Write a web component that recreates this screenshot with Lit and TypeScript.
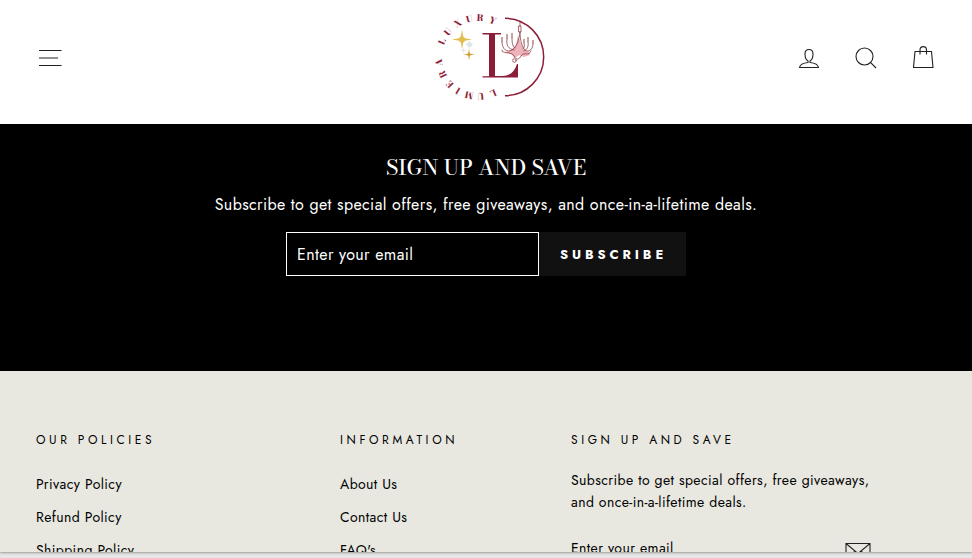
import { LitElement, html, svg, css } from "lit";
import { customElement } from "lit/decorators.js";

@customElement("brand-logo")
class BrandLogo extends LitElement {
  static styles = css`
    :host { display: block; }
    svg { display: block; }
    .ring { font: 800 9px "Bodoni Moda", "Liberation Serif", serif; fill: #8c1d38; text-anchor: middle; letter-spacing: 0; }
    .wine { fill: #8c1d38; }
    .arc { fill: none; stroke: #8c1d38; stroke-width: 1.5; }
    .gold { fill: #e2bd4b; }
    .amber { fill: #d0a23a; }
    .silver { fill: #dfe3e8; }
    .blush { fill: #efb3bb; }
    .arms { fill: none; stroke: #8a4048; stroke-width: 0.8; stroke-linecap: round; }
    .candles { fill: none; stroke: #b08078; stroke-width: 1.4; }
  `;

  private letters: [string, number][] = [
    ["L", -67], ["U", -50], ["X", -31], ["U", -13], ["R", 3], ["Y", 22],
    ["L", -203], ["U", -184], ["M", -167], ["I", -149], ["E", -134], ["R", -116], ["A", -98],
  ];

  private star(x: number, y: number, r: number, name: string) {
    const c = r / 7;
    return svg`<path class=${name} d="M${x} ${y - r}L${x + c} ${y - c}L${x + r} ${y}L${x + c} ${y + c}L${x} ${y + r}L${x - c} ${y + c}L${x - r} ${y}L${x - c} ${y - c}Z"/>`;
  }

  render() {
    return html`<svg width="116" height="92" viewBox="-3 0 116 92" role="img" aria-label="Lumiera Luxury">
      ${this.letters.map(([ch, a]) => svg`<text class="ring" transform="rotate(${a} 46 46) translate(46 10)">${ch}</text>`)}
      <path class="arc" d="M73 7.3A38.7 38.7 0 0 1 73 84.7"/>
      ${this.star(30, 28.5, 10, "gold")}
      <circle class="gold" cx="30" cy="28.5" r="3"/>
      ${this.star(37.5, 33.5, 5, "silver")}
      <circle class="silver" cx="37.5" cy="33.5" r="2.5"/>
      ${this.star(31.5, 39.5, 3.5, "silver")}
      ${this.star(37, 43.5, 6, "amber")}
      <circle class="amber" cx="37" cy="43.5" r="1.8"/>
      <path class="wine" d="M50.5 22H69v1.400H63V65h7.500c7 0 12-4 14.500-12h1V66.500H50.500V65.200h6.500V23.400h-6.500z"/>
      <path class="blush" d="M86 24l3 9 3 6 5 2 1 3-6 2-5-2-4 3-4-4-7-1 7-3 5-5z"/>
      <path class="candles" d="M70 26v5M75 23v5M80 22v5M92 28v4M96 26v5M101 29v4"/>
      <path class="arms" d="M88 11v4M87 15h2v6h-2zM88 21c-1 8-3 15-8 18-5 3-10-1-10-8M88 21c0 8 2 15 5 18 4 3 8-1 8-6M75 28c-1 6 1 10 7 11M80 27c0 6 1 9 3 10M92 32c1 3 0 5-1 6M96 31c1 4-1 8-4 9M70 39c-2 4 10 1 12 6 2 4 5 4 7 0 3-5 8 1 10-5"/>
      <circle class="arms" cx="82.5" cy="49.500" r="1.800"/>
    </svg>`;
  }
}

@customElement("app-root")
class AppRoot extends LitElement {
  static styles = css`
    :host {
      display: flex;
      flex-direction: column;
      height: 100vh;
      background: #e6e6e6;
      font-family: Jost, Lato, sans-serif;
      font-size: 16px;
      letter-spacing: 0.025em;
      color: #000;
    }
    * { box-sizing: border-box; }
    h2, h3, p, ul { margin: 0; padding: 0; font-weight: 400; }
    ul { list-style: none; }
    a { color: inherit; text-decoration: none; }
    button { border: 0; padding: 0; background: none; font: inherit; color: inherit; cursor: pointer; }
    input { border: 0; border-radius: 0; background: none; color: inherit; font: inherit; letter-spacing: inherit; min-width: 0; outline: 0; }
    input::placeholder { color: inherit; opacity: 1; }
    .page { flex: 1; min-height: 0; overflow: hidden; background: #e8e8e0; box-shadow: 0 1px 2px #9a9a9a; margin-bottom: 6px; }
    header {
      display: grid;
      grid-template-columns: 1fr auto 1fr;
      align-items: center;
      height: 124px;
      padding: 0 35px 10px 36px;
      background: #fff;
    }
    .icon { display: block; fill: none; stroke: #222; stroke-width: 1.1; }
    .menu, .tools { display: flex; align-items: center; margin-top: 2px; }
    .tools { justify-content: flex-end; gap: 29px; }
    .signup { background: #000; color: #fff; text-align: center; padding: 28px 20px 95px; }
    .title { font: 500 21px/30px "Bodoni Moda", "Liberation Serif", serif; letter-spacing: 0; }
    .lead { line-height: 26px; margin: 10px 0 14px; }
    .signup form { display: flex; max-width: 400px; height: 44px; margin: 0 auto; }
    .email { flex: 1; border: 1px solid #fff; padding: 0 10px; }
    .submit { background: #111; width: 147px; padding-left: 2px; font-size: 13px; font-weight: 700; letter-spacing: 0.3em; }
    footer {
      display: grid;
      grid-template-columns: 304fr 231fr 365fr;
      padding: 58px 36px 60px;
      font-size: 14px;
      line-height: 22px;
    }
    h3 { font-size: 12px; line-height: 22px; letter-spacing: 0.3em; }
    .links { margin-top: 17px; }
    .links a { display: block; padding: 5px 0 6px; }
    .blurb { margin-top: 18px; max-width: 300px; }
    .mail { display: flex; align-items: center; max-width: 300px; margin-top: 17px; height: 36px; border-bottom: 1px solid #000; }
    .mail input { flex: 1; padding: 0; }
  `;

  private column(title: string, items: string[]) {
    return html`<nav aria-label=${title}>
      <h3>${title}</h3>
      <ul class="links">${items.map((t) => html`<li><a href="#">${t}</a></li>`)}</ul>
    </nav>`;
  }

  render() {
    return html`<div class="page">
      <header>
        <div class="menu"><button aria-label="Site navigation">
          <svg class="icon" width="28" height="28" viewBox="0 0 28 28"><path d="M3 6.500h22.500M3 14h19M3 21.500h22.500"/></svg>
        </button></div>
        <a href="#" aria-label="Lumiera Luxury home"><brand-logo></brand-logo></a>
        <div class="tools">
          <a href="#" aria-label="Log in"><svg class="icon" width="28" height="28" viewBox="0 0 28 28"><path d="M14 5.500c-3 0-4 1.500-4 4.500 0 3.500 1.200 6 3 7v1.500c-5 .5-8 2-8.500 5h19c-.5-3-3.500-4.500-8.500-5v-1.500c1.800-1 3-3.500 3-7 0-3-1-4.500-4-4.500z"/></svg></a>
          <button aria-label="Search"><svg class="icon" width="28" height="28" viewBox="0 0 28 28"><circle cx="12.500" cy="12.500" r="8.500"/><path d="M18.700 18.700l5.300 5.300"/></svg></button>
          <a href="#" aria-label="Cart"><svg class="icon" width="28" height="28" viewBox="0 0 28 28"><path d="M6 7.500h16.500l1.500 16H4.500zM11 10.500V6c0-4.500 6.500-4.500 6.500 0v4.500"/></svg></a>
        </div>
      </header>
      <section class="signup">
        <h2 class="title">SIGN UP AND SAVE</h2>
        <p class="lead">Subscribe to get special offers, free giveaways, and once-in-a-lifetime deals.</p>
        <form>
          <input class="email" type="email" aria-label="Enter your email" placeholder="Enter your email">
          <button class="submit" type="button">SUBSCRIBE</button>
        </form>
      </section>
      <footer>
        ${this.column("OUR POLICIES", ["Privacy Policy", "Refund Policy", "Shipping Policy"])}
        ${this.column("INFORMATION", ["About Us", "Contact Us", "FAQ's"])}
        <section>
          <h3>SIGN UP AND SAVE</h3>
          <p class="blurb">Subscribe to get special offers, free giveaways, and once-in-a-lifetime deals.</p>
          <form class="mail">
            <input type="email" aria-label="Enter your email" placeholder="Enter your email">
            <button type="button" aria-label="Subscribe"><svg class="icon" width="26" height="26" viewBox="0 0 26 26"><path d="M1 8.500h24v16H1zM1 8.500l12 10 12-10M1 24.500l9-8.500M25 24.500l-9-8.500"/></svg></button>
          </form>
        </section>
      </footer>
    </div>`;
  }
}
